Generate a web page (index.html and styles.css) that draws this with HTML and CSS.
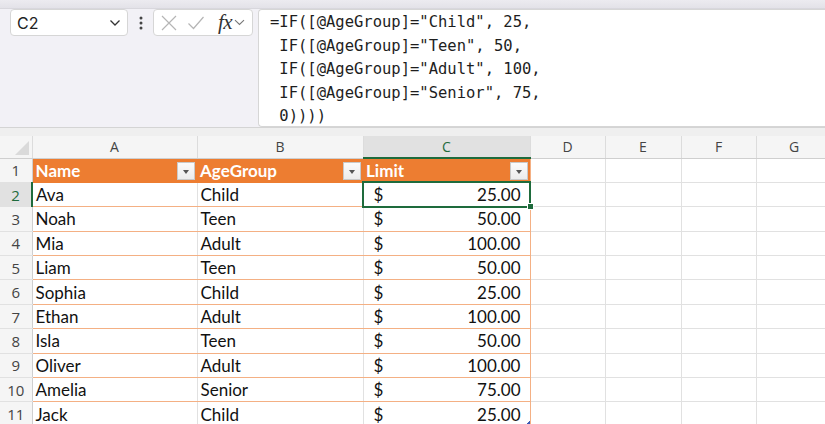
FILE: index.html
```html
<!DOCTYPE html>
<html lang="en">
<head>
    <meta charset="UTF-8">
    <title>Limit by AgeGroup</title>
    <link rel="stylesheet" href="styles.css">
</head>
<body>

    <!-- Barra de fórmulas -->
    <div class="ribbon-edge"></div>
    <div class="formula-bar">
        <div class="name-box">
            <span>C2</span>
            <svg width="12" height="8" viewBox="0 0 12 8"><path d="M1.5 1.5 L6 6 L10.5 1.5" fill="none" stroke="#333" stroke-width="1.3"/></svg>
        </div>
        <div class="dots">
            <svg width="4" height="14" viewBox="0 0 4 14"><circle cx="2" cy="2" r="1.5" fill="#444"/><circle cx="2" cy="7" r="1.5" fill="#444"/><circle cx="2" cy="12" r="1.5" fill="#444"/></svg>
        </div>
        <div class="fx-box">
            <svg width="18" height="18" viewBox="0 0 18 18"><path d="M2 2 L16 16 M16 2 L2 16" stroke="#b5b5b5" stroke-width="1.2"/></svg>
            <svg width="18" height="18" viewBox="0 0 18 18"><path d="M1.5 9.5 L6.5 14.5 L16.5 3" fill="none" stroke="#b5b5b5" stroke-width="1.2"/></svg>
            <span class="fx">fx</span>
            <svg width="11" height="7" viewBox="0 0 11 7"><path d="M1 1.2 L5.5 5.5 L10 1.2" fill="none" stroke="#777" stroke-width="1.1"/></svg>
        </div>
        <pre class="formula-input">=IF([@AgeGroup]="Child", 25,
 IF([@AgeGroup]="Teen", 50,
 IF([@AgeGroup]="Adult", 100,
 IF([@AgeGroup]="Senior", 75,
 0))))</pre>
    </div>

    <!-- Hoja -->
    <div class="sheet-gap"></div>
    <table class="sheet">
        <colgroup>
            <col style="width:32px"><col style="width:165px"><col style="width:166px"><col style="width:167px">
            <col style="width:75px"><col style="width:76px"><col style="width:75px"><col style="width:76px">
        </colgroup>
        <tr class="col-heads">
            <th class="corner"><div class="corner-tri"></div></th>
            <th>A</th><th>B</th><th class="active-col">C</th><th>D</th><th>E</th><th>F</th><th>G</th>
        </tr>
        <tr class="tbl-head">
            <th class="row-num">1</th>
            <td class="t-first"><span>Name</span><i class="filter"></i></td>
            <td><span>AgeGroup</span><i class="filter"></i></td>
            <td class="t-last"><span>Limit</span><i class="filter"></i></td>
            <td></td><td></td><td></td><td></td>
        </tr>
        <tr>
            <th class="row-num active-row">2</th>
            <td class="t-first">Ava</td><td>Child</td>
            <td class="t-last money selected"><span class="cur">$</span><span class="amt">25.00</span><i class="handle"></i></td>
            <td></td><td></td><td></td><td></td>
        </tr>
        <tr><th class="row-num">3</th><td class="t-first">Noah</td><td>Teen</td><td class="t-last money"><span class="cur">$</span><span class="amt">50.00</span></td><td></td><td></td><td></td><td></td></tr>
        <tr><th class="row-num">4</th><td class="t-first">Mia</td><td>Adult</td><td class="t-last money"><span class="cur">$</span><span class="amt">100.00</span></td><td></td><td></td><td></td><td></td></tr>
        <tr><th class="row-num">5</th><td class="t-first">Liam</td><td>Teen</td><td class="t-last money"><span class="cur">$</span><span class="amt">50.00</span></td><td></td><td></td><td></td><td></td></tr>
        <tr><th class="row-num">6</th><td class="t-first">Sophia</td><td>Child</td><td class="t-last money"><span class="cur">$</span><span class="amt">25.00</span></td><td></td><td></td><td></td><td></td></tr>
        <tr><th class="row-num">7</th><td class="t-first">Ethan</td><td>Adult</td><td class="t-last money"><span class="cur">$</span><span class="amt">100.00</span></td><td></td><td></td><td></td><td></td></tr>
        <tr><th class="row-num">8</th><td class="t-first">Isla</td><td>Teen</td><td class="t-last money"><span class="cur">$</span><span class="amt">50.00</span></td><td></td><td></td><td></td><td></td></tr>
        <tr><th class="row-num">9</th><td class="t-first">Oliver</td><td>Adult</td><td class="t-last money"><span class="cur">$</span><span class="amt">100.00</span></td><td></td><td></td><td></td><td></td></tr>
        <tr><th class="row-num">10</th><td class="t-first">Amelia</td><td>Senior</td><td class="t-last money"><span class="cur">$</span><span class="amt">75.00</span></td><td></td><td></td><td></td><td></td></tr>
        <tr class="last-row"><th class="row-num">11</th><td class="t-first">Jack</td><td>Child</td><td class="t-last money"><span class="cur">$</span><span class="amt">25.00</span><i class="resize"></i></td><td></td><td></td><td></td><td></td></tr>
    </table>

</body>
</html>
```

FILE: styles.css
```css
/* General */
body {
    margin: 0;
    background-color: #f2f1f6;
    font-family: 'Lato', 'Liberation Sans', sans-serif;
    overflow: hidden;
    width: 825px;
    height: 424px;
}

.ribbon-edge {
    height: 8px;
    background: linear-gradient(#ecebf0, #e3e2e8);
    border-bottom: 1px solid #d8d7dd;
}

/* Formula bar */
.formula-bar {
    display: flex;
    align-items: flex-start;
    height: 117px;
    padding-left: 10px;
}

.name-box {
    box-sizing: border-box;
    width: 118px;
    height: 27px;
    background: #fff;
    border: 1px solid #d6d6d6;
    border-radius: 4px;
    display: flex;
    align-items: center;
    justify-content: space-between;
    padding: 0 6px 0 6px;
    font-family: 'Inter', 'Liberation Sans', sans-serif;
    font-size: 16px;
    color: #222;
}

.dots {
    width: 25px;
    height: 27px;
    display: flex;
    align-items: center;
    justify-content: center;
}

.fx-box {
    box-sizing: border-box;
    width: 100px;
    height: 27px;
    background: #fff;
    border: 1px solid #d6d6d6;
    border-radius: 4px;
    display: flex;
    align-items: center;
    gap: 9px;
    padding-left: 6px;
}

.fx-box .fx {
    font-family: 'Liberation Serif', serif;
    font-style: italic;
    font-size: 21px;
    color: #333;
    margin-left: 4px;
    margin-right: -7px;
    letter-spacing: -0.5px;
}

.formula-input {
    flex: 1;
    box-sizing: border-box;
    height: 118px;
    margin: 0 0 0 5px;
    background: #fff;
    border: 1px solid #d6d6d6;
    border-right: none;
    border-radius: 4px 0 0 4px;
    padding: 1px 0 0 11px;
    font-family: 'DejaVu Sans Mono', monospace;
    font-size: 15.5px;
    line-height: 23.5px;
    color: #1e1e1e;
}

.sheet-gap {
    height: 8px;
    margin-top: 1px;
    border-top: 1px solid #d4d4d4;
    background: #efefef;
}

/* Sheet */
.sheet {
    border-collapse: collapse;
    table-layout: fixed;
    width: 832px;
    background: #fff;
    font-family: 'Lato', 'Liberation Sans', sans-serif;
    font-size: 17px;
}

.sheet td,
.sheet th {
    padding: 0;
    height: 24.4px;
    box-sizing: border-box;
    border-right: 1px solid #e1e1e1;
    border-bottom: 1px solid #e1e1e1;
    white-space: nowrap;
    overflow: visible;
}

.sheet td {
    padding-left: 3px;
    color: #111;
    position: relative;
}

.col-heads th {
    height: 22px;
    background: #f5f5f5;
    font-family: 'Open Sans', 'Liberation Sans', sans-serif;
    font-weight: normal;
    font-size: 14px;
    color: #444;
    border-right: 1px solid #dcdcdc;
    border-bottom: 1px solid #cfcfcf;
}

.col-heads th.active-col {
    background: #e1e1e1;
    color: #1e6b3c;
    border-bottom: 2px solid #1e6b3c;
}

.corner {
    position: relative;
}

.corner-tri {
    position: absolute;
    right: 3px;
    bottom: 3px;
    width: 0;
    height: 0;
    border-left: 14px solid transparent;
    border-bottom: 14px solid #dadada;
}

.row-num {
    background: #f5f5f5;
    font-family: 'Open Sans', 'Liberation Sans', sans-serif;
    font-weight: normal;
    font-size: 15px;
    color: #444;
    text-align: center;
    border-right: 1px solid #cfcfcf !important;
}

.row-num.active-row {
    background: #e1e1e1;
    color: #1e6b3c;
    border-right: 2px solid #1e6b3c !important;
}

/* Table header */
.tbl-head td:nth-child(-n+4) {
    background: #ed7d31;
    color: #fff;
    font-weight: bold;
    border-right: none;
    border-bottom: 1px solid #ed7d31;
}

.filter {
    position: absolute;
    right: 2px;
    top: 3px;
    width: 18px;
    height: 18px;
    box-sizing: border-box;
    background: linear-gradient(#fbfbfb, #ececec);
    border: 1px solid #c9c9c9;
}

.filter::after {
    content: "";
    position: absolute;
    left: 5px;
    top: 7px;
    border-left: 3.5px solid transparent;
    border-right: 3.5px solid transparent;
    border-top: 4px solid #555;
}

/* Table body */
.sheet tr:not(.col-heads):not(.tbl-head) td:nth-child(-n+4) {
    border-bottom: 1px solid #f4b084;
}

.t-first {
    border-left: 1px solid #f4b084;
}

.sheet td.t-last {
    border-right: 1px solid #f4b084;
}

.sheet td.money {
    padding-right: 9px;
}

.money .cur {
    float: left;
    padding-left: 7px;
}

.money .amt {
    float: right;
}

.selected {
    outline: 2px solid #1e6b3c;
    outline-offset: -1px;
}

.handle {
    position: absolute;
    right: -4px;
    bottom: -4px;
    width: 5px;
    height: 5px;
    background: #1e6b3c;
    border: 1px solid #fff;
    z-index: 2;
}

.resize {
    position: absolute;
    right: 0;
    bottom: 1px;
    width: 4px;
    height: 4px;
    background: linear-gradient(135deg, transparent 50%, #3b5bb5 50%);
}
```
